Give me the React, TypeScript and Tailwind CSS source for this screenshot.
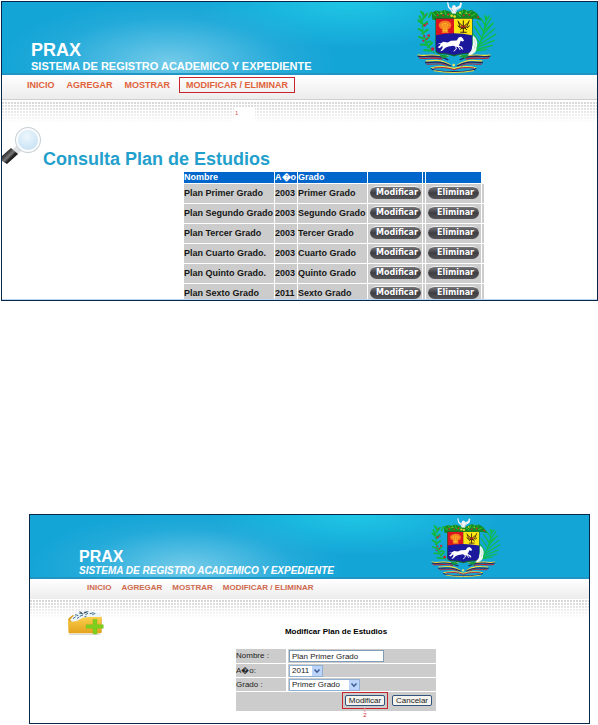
import React from "react";

const MENU = ["INICIO", "AGREGAR", "MOSTRAR", "MODIFICAR / ELIMINAR"];

const PLANS = [
  { name: "Plan Primer Grado", year: "2003", grade: "Primer Grado" },
  { name: "Plan Segundo Grado", year: "2003", grade: "Segundo Grado" },
  { name: "Plan Tercer Grado", year: "2003", grade: "Tercer Grado" },
  { name: "Plan Cuarto Grado.", year: "2003", grade: "Cuarto Grado" },
  { name: "Plan Quinto Grado.", year: "2003", grade: "Quinto Grado" },
  { name: "Plan Sexto Grado", year: "2011", grade: "Sexto Grado" },
];

function Emblem({ className }: { className: string }) {
  return (
    <svg viewBox="358 4 240 216" preserveAspectRatio="none" className={className} role="img" aria-label="Escudo">
      {/* laurel branch */}
      <g fill="none" stroke="#12b83c" strokeLinecap="round">
        <path d="M412 160C380 135 368 90 378 35" strokeWidth="3" />
        <path
          d="M378 45l-8-12M377 55l12-16M374 70l-12-10M374 78l14-14M373 92l-10-6M374 100l16-12M378 115l-14-5M381 122l14-12M387 135l-18-2M391 142l12-14M400 152l-20-2M394 50l6-14M372 62l-6-14M384 128l14-4"
          strokeWidth="6"
        />
      </g>
      <g fill="#c4203a">
        <circle cx="381" cy="75" r="4" /><circle cx="388" cy="70" r="3" /><circle cx="380" cy="108" r="3" />
        <circle cx="393" cy="106" r="4" /><circle cx="387" cy="116" r="3" /><circle cx="405" cy="147" r="5" />
        <circle cx="377" cy="122" r="3" /><circle cx="383" cy="43" r="2" />
      </g>
      {/* palm */}
      <g fill="none" stroke="#10bd45" strokeWidth="4" strokeLinecap="round">
        <path d="M526 160C548 135 562 95 566 48" />
        <path d="M563 75l-14-22M562 82l18-28M558 95l-20-32M556 104l30-36M552 113l-22-34M549 121l42-36M545 128l-18-28M541 136l53-34M536 143l54-22M532 150l52-14M527 154l40-6M540 134l-14-24M560 90l26-20M566 60l-5-15M566 60l9-14" />
      </g>
      {/* garland */}
      <path d="M402 36l14-6 12 3 12-5 18 6h24l16-8 12 5 12-3 16 10 14 22-20-6-28 6H424l-20-2z" fill="#138a24" />
      <g fill="none" stroke="#39c736" strokeWidth="3" strokeLinecap="round">
        <path d="M405 38l10 8M415 32l9 9M428 30l7 10M441 31l4 12M495 30l-4 12M508 28l-6 12M520 33l-8 10M533 40l-12 6M449 46l10-7M478 40l11 8" />
      </g>
      <g fill="#d32929">
        <circle cx="420" cy="44" r="3" /><circle cx="437" cy="45" r="3" /><circle cx="452" cy="42" r="3" />
        <circle cx="498" cy="45" r="3" /><circle cx="515" cy="43" r="3" /><circle cx="541" cy="50" r="3" />
      </g>
      <g fill="#f3dc25">
        <circle cx="430" cy="39" r="2" /><circle cx="462" cy="46" r="4" /><circle cx="471" cy="48" r="4" />
        <circle cx="487" cy="37" r="3" /><circle cx="507" cy="38" r="2" />
      </g>
      <path d="M448 5l3 16 9 9 3 9 11 1 4-10 12-9 3-13-5-3-3 10-9 5-5-7-6 2-3 8-7-4-3-14z" fill="#eef4f8" />
      <path d="M460 23l6 9M480 24l-7 11" stroke="#96a6b8" strokeWidth="2" />
      {/* shield */}
      <path d="M413 53h112v96q0 12-13 13-28 1-43 8-15-7-43-8-13-1-13-13z" fill="#17622a" />
      <path d="M415 55h54v55h-54z" fill="#dc1420" />
      <path d="M469 55h54v55h-54z" fill="#ffe612" />
      <path d="M415 105q54-12 108 0v42q0 11-13 12-27 1-41 6-14-5-41-6-13-1-13-12z" fill="#1c189c" />
      <path d="M423 74c2-16 36-18 38 0-2 12-8 12-12 13l4 11h-21l4-11c-6-1-11-2-13-13z" fill="#f47c20" />
      <path d="M429 76q13-14 26 0M435 72l3 22M449 72l-3 22M442 70v25M432 90h20" stroke="#ffc928" strokeWidth="2" fill="none" />
      <path d="M481 61l6 19 10 5 10-5 8-20M497 60v37M488 96h19M484 67l24 22M510 68l-22 20M480 76l8 7M516 76l-8 7" stroke="#33220e" strokeWidth="3" fill="none" />
      <path d="M490 76q7 9 14 0" stroke="#c42020" strokeWidth="4" fill="none" />
      {/* horse and plume */}
      <path d="M427 131l10-6 13 2 10-5 17-1 6-9 7-2 6 5 3 7-4 2-6-2-3 9-3 5 10 4 4 9-5-1-4-6-13-2-8-3-15 2-9 4-9 9-6 2 7-11-1-6-8 8-6-3 8-7-1-6-9 4z" fill="#fff" />
      <path d="M474 138l2 9-8 7M480 138l8 12" stroke="#fff" strokeWidth="3" fill="none" />
      <path d="M526 106c12 8 16 26 10 38 2 10-7 17-16 22l-10-2c8-8 14-14 13-23 5-10 1-20 3-35z" fill="#f2f8f4" />
      <path d="M529 116q8 16 1 30" stroke="#abd7bb" strokeWidth="2" fill="none" />
      {/* tricolour ribbons */}
      <g fill="none">
        <path d="M360 165c20 6 35-5 70 4h22M578 165c-20 6-35-5-70 4h-22" stroke="#f2df3c" strokeWidth="4" />
        <path d="M360 169c22 5 38-5 72 3l20 8M578 169c-22 5-38-5-72 3l-20 8" stroke="#20245e" strokeWidth="4" />
        <path d="M364 174c22 5 39-5 70 4M574 174c-22 5-39-5-70 4" stroke="#bd2030" strokeWidth="4" />
        <path d="M384 184c26-3 49-7 75 13M554 184c-26-3-49-7-75 13" stroke="#f2df3c" strokeWidth="4" />
        <path d="M382 188c28 1 45-7 78 11M556 188c-28 1-45-7-78 11" stroke="#20245e" strokeWidth="4" />
        <path d="M386 193c26 2 45-6 64 6M552 193c-26 2-45-6-64 6" stroke="#bd2030" strokeWidth="3" />
        <path d="M400 205c25-6 45-6 69 1 24-7 44-7 67-1" stroke="#f2df3c" strokeWidth="4" />
        <path d="M401 205c-2 15 135 15 134 0" stroke="#20245e" strokeWidth="4" />
        <path d="M408 205c25-3 40-2 61 5 21-7 36-8 60-5" stroke="#bd2030" strokeWidth="3" />
        <path d="M408 213q61 11 121 0" stroke="#f2df3c" strokeWidth="3" />
      </g>
      <circle cx="468" cy="196" r="4" fill="#f6ea6a" />
      <path d="M424 164q20-1 30 6l-18 6zM514 164q-20-1-30 6l18 6z" fill="#169b3a" />
    </svg>
  );
}

function Magnifier() {
  return (
    <svg viewBox="0 0 40 38" className="h-[38px] w-10 shrink-0" aria-hidden="true">
      <defs>
        <radialGradient id="lens" cx="0.45" cy="0.35" r="0.75">
          <stop offset="0" stopColor="#eef7fd" />
          <stop offset="0.7" stopColor="#cbe4f5" />
          <stop offset="1" stopColor="#b4d4ea" />
        </radialGradient>
        <linearGradient id="grip" x1="0.2" y1="0.2" x2="0.8" y2="0.8">
          <stop offset="0" stopColor="#111" />
          <stop offset="0.45" stopColor="#777" />
          <stop offset="0.65" stopColor="#222" />
          <stop offset="1" stopColor="#111" />
        </linearGradient>
      </defs>
      <path d="M15 18l5 5-5 5-5-5z" fill="#dfe2e4" />
      <path d="M9 21l7 6L5 37l-5-3v-5z" fill="url(#grip)" />
      <circle cx="26" cy="13" r="12" fill="url(#lens)" stroke="#c9d1d6" strokeWidth="2" />
      <circle cx="26" cy="13" r="11" fill="none" stroke="#f9fbfc" strokeWidth="2" />
    </svg>
  );
}

function FolderAdd() {
  return (
    <svg viewBox="0 0 114 75" className="h-[25px] w-[38px]" aria-hidden="true">
      <defs>
        <linearGradient id="folder" x1="0" y1="0" x2="0" y2="1">
          <stop offset="0" stopColor="#fbd04c" />
          <stop offset="1" stopColor="#e3a11c" />
        </linearGradient>
      </defs>
      <path d="M6 71h95l-4 4H9z" fill="#d9d9d9" />
      <path d="M4 26l12-10 78-4 10 10v46H6z" fill="#d99a1c" />
      <path d="M9 29L28 8l22-6 50 7 3 18-40 6-48 3z" fill="#eef3f6" />
      <path d="M18 26l8-6M24 14l10 3M36 9l12 3M38 19l10-4M52 7l12-2M55 14l8-4M68 11l12-3M30 25l6-3M52 21l6-2M76 14l9-4" stroke="#3b7192" strokeWidth="3" />
      <path d="M38 5l8 5M50 10l9-4" stroke="#31383c" strokeWidth="3" />
      <path d="M3 33q20 5 32-3 14-10 35-9h33l-2 49H5z" fill="url(#folder)" />
      <path d="M78 28h12v16h19v11H90v17H78V55H57V44h21z" fill="#7ed01e" stroke="#69b51c" strokeWidth="1" />
    </svg>
  );
}

function Banner({ small = false }: { small?: boolean }) {
  return (
    <header
      className={
        "flex items-end justify-between border-b-2 border-[#2196c4] bg-[#14a5d7] bg-[radial-gradient(ellipse_28%_90%_at_28%_85%,#74cbe9_0%,#62c3e6b0_35%,#40b4de50_70%,transparent_100%),radial-gradient(ellipse_26%_65%_at_58%_0%,#1fc6e4_0%,transparent_100%)] " +
        (small ? "h-16 pr-[88px] pl-[49px]" : "h-[73px] pr-[100px] pl-[29px]")
      }
    >
      <div className="font-bold whitespace-nowrap text-white">
        <h1 className={small ? "text-[16px] leading-[16px]" : "text-[18px] leading-[18px]"}>PRAX</h1>
        <p className={small ? "text-[10px] leading-3 italic" : "text-[11px] leading-[14px]"}>
          SISTEMA DE REGISTRO ACADEMICO Y EXPEDIENTE
        </p>
      </div>
      <Emblem className={small ? "h-[59px] w-[70px] shrink-0" : "h-[71px] w-20 shrink-0"} />
    </header>
  );
}

function Dots({ className }: { className: string }) {
  return (
    <div
      className={
        "bg-[linear-gradient(to_bottom,transparent,white),radial-gradient(circle_at_1px_1px,#d6d6d6_1px,transparent_1px)] bg-[size:100%_100%,3px_3px] " +
        className
      }
    />
  );
}

function PillButton({ children }: { children: string }) {
  return (
    <button
      type="button"
      className="mx-auto block h-[13px] w-[51px] rounded-full border-t border-[#eeeeee] bg-linear-to-b from-[#77777b] via-[#3e3e42] to-[#55555a] pl-1 text-center font-['DejaVu_Sans',sans-serif] text-[8px] leading-[10px] font-bold text-white"
    >
      {children}
    </button>
  );
}

function ConsultPanel() {
  return (
    <section className="border border-[#08284a] bg-white">
      <Banner />
      <nav className="flex h-[25px] items-start border-b border-[#cfcfcf] bg-linear-to-b from-white to-[#ececec] pt-0.5 pl-[25px] text-[9px] leading-[14px] font-bold whitespace-nowrap text-[#e0623c]">
        {MENU.map((item, i) => (
          <a
            key={item}
            href="#"
            className={i === MENU.length - 1 ? "-ml-[3px] border border-[#c8242c] px-1.5" : "mr-3 border border-x-0 border-transparent"}
          >
            {item}
          </a>
        ))}
      </nav>
      <div className="relative pt-0.5">
        <Dots className="h-[21px]" />
        <span className="absolute top-2 left-[232px] h-[14px] w-[21px] bg-white pl-px text-[6px] leading-[11px] text-[#e0525a]">
          1
        </span>
      </div>
      <div className="flex items-end gap-px pt-1">
        <Magnifier />
        <h2 className="text-[18px] leading-3 font-bold whitespace-nowrap text-[#239fcc]">Consulta Plan de Estudios</h2>
      </div>
      <div className="mt-1.5 ml-[181px] h-32 overflow-hidden">
        <table className="w-[302px] table-fixed border-separate border-spacing-px text-[9px] leading-[11px] font-bold whitespace-nowrap text-[#161616]">
          <colgroup>
            <col className="w-[90px]" />
            <col className="w-[22px]" />
            <col className="w-[69px]" />
            <col className="w-[54px]" />
            <col className="w-0.5" />
            <col className="w-[55px]" />
            <col className="w-0.5" />
          </colgroup>
          <thead>
            <tr className="h-[11px] text-left text-white [&>th]:bg-[#0066cc] [&>th]:p-0">
              <th>Nombre</th>
              <th>A{"\uFFFD"}o</th>
              <th>Grado</th>
              <th></th>
              <th></th>
              <th></th>
            </tr>
          </thead>
          <tbody>
            {PLANS.map((p) => (
              <tr key={p.name} className="h-[19px] [&>td]:bg-[#cccccc] [&>td]:p-0">
                <td>{p.name}</td>
                <td>{p.year}</td>
                <td>{p.grade}</td>
                <td className="align-top"><div className="pt-0.5"><PillButton>Modificar</PillButton></div></td>
                <td></td>
                <td className="align-top"><div className="pt-0.5"><PillButton>Eliminar</PillButton></div></td>
                <td></td>
              </tr>
            ))}
          </tbody>
        </table>
      </div>
      <div className="h-px bg-[#bcd6f2]" />
    </section>
  );
}

function Select({ id, value, className }: { id: string; value: string; className: string }) {
  return (
    <div className={"relative " + className}>
      <select
        id={id}
        defaultValue={value}
        className="block h-3 w-full appearance-none border border-[#8fb0d0] bg-white pl-0.5 text-[8px] leading-[10px]"
      >
        <option>{value}</option>
      </select>
      <span className="pointer-events-none absolute top-px right-px flex h-2.5 w-2.5 items-center justify-center bg-[#bcd3fa]">
        <svg viewBox="0 0 8 6" className="h-1.5 w-2" aria-hidden="true">
          <path d="M1.5 1.5L4 4.2 6.500 1.500" fill="none" stroke="#3c5c94" strokeWidth="1.5" />
        </svg>
      </span>
    </div>
  );
}

function FormRow({ id, label, children }: { id: string; label: string; children: React.ReactNode }) {
  return (
    <div className="flex gap-0.5">
      <label htmlFor={id} className="flex w-[50px] items-center bg-[#cccccc]">
        {label}
      </label>
      <div className="flex-1 bg-[#cccccc] pl-px">{children}</div>
    </div>
  );
}

const FORM_BUTTON =
  "h-[11px] rounded-[2px] border border-[#33547c] bg-[#f4f3ee] text-center text-[8px] leading-[9px]";

function EditPanel() {
  return (
    <section className="mr-2 ml-[28px] border border-[#08284a] bg-white">
      <Banner small />
      <nav className="flex h-5 items-start gap-2.5 bg-linear-to-b from-white to-[#ececec] pt-[3px] pl-[57px] text-[8px] leading-3 font-bold whitespace-nowrap text-[#cf6a50]">
        {MENU.map((item) => (
          <a key={item} href="#">
            {item}
          </a>
        ))}
      </nav>
      <div className="relative pt-px">
        <Dots className="h-[18px]" />
        <div className="absolute top-[11px] left-[37px]">
          <FolderAdd />
        </div>
      </div>
      <form className="ml-[206px] w-[200px] pt-2 text-[8px] leading-[10px] text-[#222]" onSubmit={(e) => e.preventDefault()}>
        <h2 className="pb-[11px] text-center leading-3 font-bold whitespace-nowrap text-black">Modificar Plan de Estudios</h2>
        <div className="flex flex-col gap-px">
          <FormRow id="nombre" label="Nombre :">
            <input
              id="nombre"
              defaultValue="Plan Primer Grado"
              className="my-px block h-3 w-[95px] border border-[#7f9db9] bg-white px-0.5 text-[8px] leading-[10px]"
            />
          </FormRow>
          <FormRow id="anio" label={"A\uFFFDo:"}>
            <Select id="anio" value="2011" className="mt-px w-[34px]" />
          </FormRow>
          <FormRow id="grado" label="Grado :">
            <Select id="grado" value="Primer Grado" className="mt-px w-[71px]" />
          </FormRow>
          <div className="flex items-start justify-end gap-1 bg-[#cccccc] pr-1 pb-0.5">
            <div className="relative border border-[#c8242c] p-0.5">
              <button type="submit" className={FORM_BUTTON + " block w-10"}>
                Modificar
              </button>
              <span className="absolute top-full left-1/2 flex -translate-x-1/2 flex-col items-center text-[6px] leading-[7px] text-[#d02030]">
                <span className="h-1 w-px bg-[#e8a0a0]" />2
              </span>
            </div>
            <button type="reset" className={FORM_BUTTON + " mt-[3px] w-10"}>
              Cancelar
            </button>
          </div>
        </div>
      </form>
      <div className="h-3" />
    </section>
  );
}

export default function App() {
  return (
    <main className="flex flex-col gap-[213px] bg-white pt-px pl-px font-['Liberation_Sans',Arial,sans-serif]">
      <ConsultPanel />
      <EditPanel />
    </main>
  );
}
